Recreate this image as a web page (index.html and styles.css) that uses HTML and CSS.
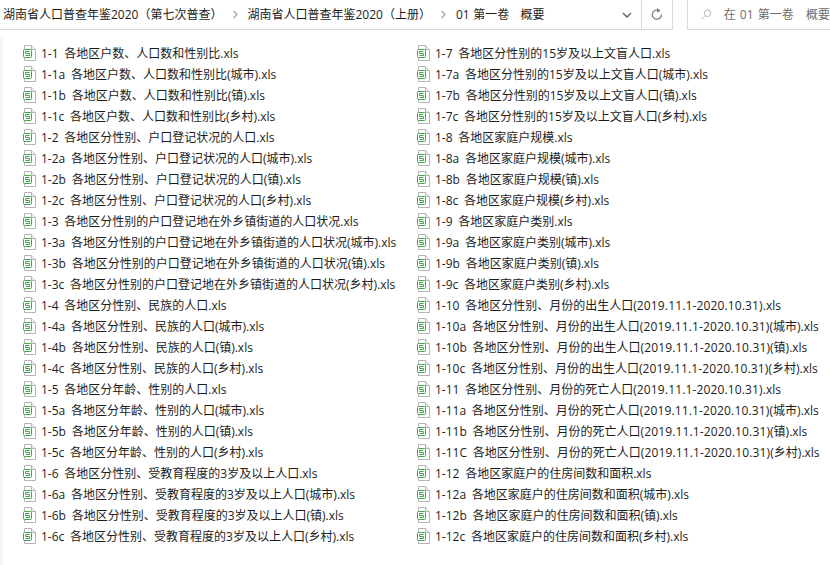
FILE: index.html
```html
<!DOCTYPE html>
<html lang="zh">
<head>
<meta charset="utf-8">
<title>01 第一卷 概要</title>
<link rel="stylesheet" href="styles.css">
</head>
<body>
<svg class="defs" width="0" height="0"><symbol id="xls" viewBox="0 0 14 16">
<path d="M1.5 .5H8.5L12.5 4.5V15.5H1.5Z" fill="#fff" stroke="#b4b4b4"/><path d="M8.5 .5V4.5H12.5" fill="#f0f0f0" stroke="#b4b4b4"/>
<rect x=".5" y="4.5" width="8" height="8" rx="1" fill="#fff" stroke="#3fa94a"/><path d="M6.5 6.5H2.5V8.5H6.5V10.5H2.5" stroke="#3fa94a" fill="none"/>
</symbol></svg>
<header class="bar">
  <nav class="path">
    <span class="crumb">湖南省人口普查年鉴2020（第七次普查）</span>
    <svg class="sep" width="6" height="9" viewBox="0 0 6 9"><path d="M1.5 1L5 4.5L1.5 8" fill="none" stroke="#a8a8a8" stroke-width="1.4"/></svg>
    <span class="crumb">湖南省人口普查年鉴2020（上册）</span>
    <svg class="sep" width="6" height="9" viewBox="0 0 6 9"><path d="M1.5 1L5 4.5L1.5 8" fill="none" stroke="#a8a8a8" stroke-width="1.4"/></svg>
    <span class="crumb">01 第一卷&nbsp;&nbsp;&nbsp;概要</span>
    <svg class="drop" width="10" height="6" viewBox="0 0 10 6"><path d="M1 1L5 5L9 1" fill="none" stroke="#666" stroke-width="1.5"/></svg>
    <span class="refresh"><svg width="12" height="13" viewBox="0 0 12 13"><path d="M10.5 6.5A4.6 4.6 0 1 1 7.5 2.3" fill="none" stroke="#777" stroke-width="1.2"/><path d="M6.2 0L9.4 2.4L6.2 4.8Z" fill="#777"/></svg></span>
  </nav>
  <div class="search">
    <svg width="13" height="13" viewBox="0 0 13 13"><circle cx="8" cy="5" r="4" fill="none" stroke="#a9a9a9"/><path d="M5 8L1 12" stroke="#d8a88a" stroke-width="1.2"/></svg>
    <span>在 01 第一卷&nbsp;&nbsp;&nbsp;概要</span>
  </div>
</header>
<main class="list">
<div class="file"><svg class="ico"><use href="#xls"/></svg><span>1-1 各地区户数、人口数和性别比.xls</span></div>
<div class="file"><svg class="ico"><use href="#xls"/></svg><span>1-1a 各地区户数、人口数和性别比(城市).xls</span></div>
<div class="file"><svg class="ico"><use href="#xls"/></svg><span>1-1b 各地区户数、人口数和性别比(镇).xls</span></div>
<div class="file"><svg class="ico"><use href="#xls"/></svg><span>1-1c 各地区户数、人口数和性别比(乡村).xls</span></div>
<div class="file"><svg class="ico"><use href="#xls"/></svg><span>1-2 各地区分性别、户口登记状况的人口.xls</span></div>
<div class="file"><svg class="ico"><use href="#xls"/></svg><span>1-2a 各地区分性别、户口登记状况的人口(城市).xls</span></div>
<div class="file"><svg class="ico"><use href="#xls"/></svg><span>1-2b 各地区分性别、户口登记状况的人口(镇).xls</span></div>
<div class="file"><svg class="ico"><use href="#xls"/></svg><span>1-2c 各地区分性别、户口登记状况的人口(乡村).xls</span></div>
<div class="file"><svg class="ico"><use href="#xls"/></svg><span>1-3 各地区分性别的户口登记地在外乡镇街道的人口状况.xls</span></div>
<div class="file"><svg class="ico"><use href="#xls"/></svg><span>1-3a 各地区分性别的户口登记地在外乡镇街道的人口状况(城市).xls</span></div>
<div class="file"><svg class="ico"><use href="#xls"/></svg><span>1-3b 各地区分性别的户口登记地在外乡镇街道的人口状况(镇).xls</span></div>
<div class="file"><svg class="ico"><use href="#xls"/></svg><span>1-3c 各地区分性别的户口登记地在外乡镇街道的人口状况(乡村).xls</span></div>
<div class="file"><svg class="ico"><use href="#xls"/></svg><span>1-4 各地区分性别、民族的人口.xls</span></div>
<div class="file"><svg class="ico"><use href="#xls"/></svg><span>1-4a 各地区分性别、民族的人口(城市).xls</span></div>
<div class="file"><svg class="ico"><use href="#xls"/></svg><span>1-4b 各地区分性别、民族的人口(镇).xls</span></div>
<div class="file"><svg class="ico"><use href="#xls"/></svg><span>1-4c 各地区分性别、民族的人口(乡村).xls</span></div>
<div class="file"><svg class="ico"><use href="#xls"/></svg><span>1-5 各地区分年龄、性别的人口.xls</span></div>
<div class="file"><svg class="ico"><use href="#xls"/></svg><span>1-5a 各地区分年龄、性别的人口(城市).xls</span></div>
<div class="file"><svg class="ico"><use href="#xls"/></svg><span>1-5b 各地区分年龄、性别的人口(镇).xls</span></div>
<div class="file"><svg class="ico"><use href="#xls"/></svg><span>1-5c 各地区分年龄、性别的人口(乡村).xls</span></div>
<div class="file"><svg class="ico"><use href="#xls"/></svg><span>1-6 各地区分性别、受教育程度的3岁及以上人口.xls</span></div>
<div class="file"><svg class="ico"><use href="#xls"/></svg><span>1-6a 各地区分性别、受教育程度的3岁及以上人口(城市).xls</span></div>
<div class="file"><svg class="ico"><use href="#xls"/></svg><span>1-6b 各地区分性别、受教育程度的3岁及以上人口(镇).xls</span></div>
<div class="file"><svg class="ico"><use href="#xls"/></svg><span>1-6c 各地区分性别、受教育程度的3岁及以上人口(乡村).xls</span></div>
<div class="file"><svg class="ico"><use href="#xls"/></svg><span>1-7 各地区分性别的15岁及以上文盲人口.xls</span></div>
<div class="file"><svg class="ico"><use href="#xls"/></svg><span>1-7a 各地区分性别的15岁及以上文盲人口(城市).xls</span></div>
<div class="file"><svg class="ico"><use href="#xls"/></svg><span>1-7b 各地区分性别的15岁及以上文盲人口(镇).xls</span></div>
<div class="file"><svg class="ico"><use href="#xls"/></svg><span>1-7c 各地区分性别的15岁及以上文盲人口(乡村).xls</span></div>
<div class="file"><svg class="ico"><use href="#xls"/></svg><span>1-8 各地区家庭户规模.xls</span></div>
<div class="file"><svg class="ico"><use href="#xls"/></svg><span>1-8a 各地区家庭户规模(城市).xls</span></div>
<div class="file"><svg class="ico"><use href="#xls"/></svg><span>1-8b 各地区家庭户规模(镇).xls</span></div>
<div class="file"><svg class="ico"><use href="#xls"/></svg><span>1-8c 各地区家庭户规模(乡村).xls</span></div>
<div class="file"><svg class="ico"><use href="#xls"/></svg><span>1-9 各地区家庭户类别.xls</span></div>
<div class="file"><svg class="ico"><use href="#xls"/></svg><span>1-9a 各地区家庭户类别(城市).xls</span></div>
<div class="file"><svg class="ico"><use href="#xls"/></svg><span>1-9b 各地区家庭户类别(镇).xls</span></div>
<div class="file"><svg class="ico"><use href="#xls"/></svg><span>1-9c 各地区家庭户类别(乡村).xls</span></div>
<div class="file"><svg class="ico"><use href="#xls"/></svg><span>1-10 各地区分性别、月份的出生人口<span class="range">(2019.11.1-2020.10.31)</span>.xls</span></div>
<div class="file"><svg class="ico"><use href="#xls"/></svg><span>1-10a 各地区分性别、月份的出生人口<span class="range">(2019.11.1-2020.10.31)</span>(城市).xls</span></div>
<div class="file"><svg class="ico"><use href="#xls"/></svg><span>1-10b 各地区分性别、月份的出生人口<span class="range">(2019.11.1-2020.10.31)</span>(镇).xls</span></div>
<div class="file"><svg class="ico"><use href="#xls"/></svg><span>1-10c 各地区分性别、月份的出生人口<span class="range">(2019.11.1-2020.10.31)</span>(乡村).xls</span></div>
<div class="file"><svg class="ico"><use href="#xls"/></svg><span>1-11 各地区分性别、月份的死亡人口<span class="range">(2019.11.1-2020.10.31)</span>.xls</span></div>
<div class="file"><svg class="ico"><use href="#xls"/></svg><span>1-11a 各地区分性别、月份的死亡人口<span class="range">(2019.11.1-2020.10.31)</span>(城市).xls</span></div>
<div class="file"><svg class="ico"><use href="#xls"/></svg><span>1-11b 各地区分性别、月份的死亡人口<span class="range">(2019.11.1-2020.10.31)</span>(镇).xls</span></div>
<div class="file"><svg class="ico"><use href="#xls"/></svg><span>1-11C 各地区分性别、月份的死亡人口<span class="range">(2019.11.1-2020.10.31)</span>(乡村).xls</span></div>
<div class="file"><svg class="ico"><use href="#xls"/></svg><span>1-12 各地区家庭户的住房间数和面积.xls</span></div>
<div class="file"><svg class="ico"><use href="#xls"/></svg><span>1-12a 各地区家庭户的住房间数和面积(城市).xls</span></div>
<div class="file"><svg class="ico"><use href="#xls"/></svg><span>1-12b 各地区家庭户的住房间数和面积(镇).xls</span></div>
<div class="file"><svg class="ico"><use href="#xls"/></svg><span>1-12c 各地区家庭户的住房间数和面积(乡村).xls</span></div>
</main>
</body>
</html>
```
FILE: styles.css
```css
* { box-sizing: border-box; }
html, body { margin: 0; height: 100%; overflow: hidden; }
body {
  background: #fff;
  color: #1c1c1c;
  font: 12px/21px "Open Sans", "Noto Sans CJK SC", sans-serif;
}
.defs { display: block; height: 0; }
.bar { display: flex; height: 30px; gap: 14px; }
.path {
  flex: 0 0 673px;
  display: flex;
  align-items: center;
  border-bottom: 1px solid #d9d9d9;
  border-right: 1px solid #d9d9d9;
  padding-left: 3px;
}
.crumb { white-space: pre; word-spacing: .6px; }
.sep { margin: 0 9.5px; }
.drop { margin-left: auto; margin-right: 9px; }
.refresh {
  flex: 0 0 31px;
  height: 100%;
  display: flex;
  align-items: center;
  justify-content: center;
  border-left: 1px solid #d9d9d9;
}
.search {
  flex: 1;
  display: flex;
  align-items: center;
  gap: 12px;
  padding-left: 13px;
  border-left: 1px solid #d9d9d9;
  border-bottom: 1px solid #d9d9d9;
  color: #6d6d6d;
  white-space: nowrap;
  word-spacing: 1px;
  overflow: hidden;
}
.list {
  display: grid;
  grid-auto-flow: column;
  grid-template-rows: repeat(24, 21px);
  grid-template-columns: 394px 394px;
  padding: 13px 0 0 23px;
  background: linear-gradient(90deg, #f5f5f5 0 3px, #fff 3px) no-repeat 0 7px;
  height: 535px;
}
.file { display: flex; align-items: center; white-space: nowrap; word-spacing: 2.6px; }
.range { letter-spacing: .14px; }
.ico { width: 14px; height: 16px; margin: 0 4px 1px 0; flex: none; }
```
